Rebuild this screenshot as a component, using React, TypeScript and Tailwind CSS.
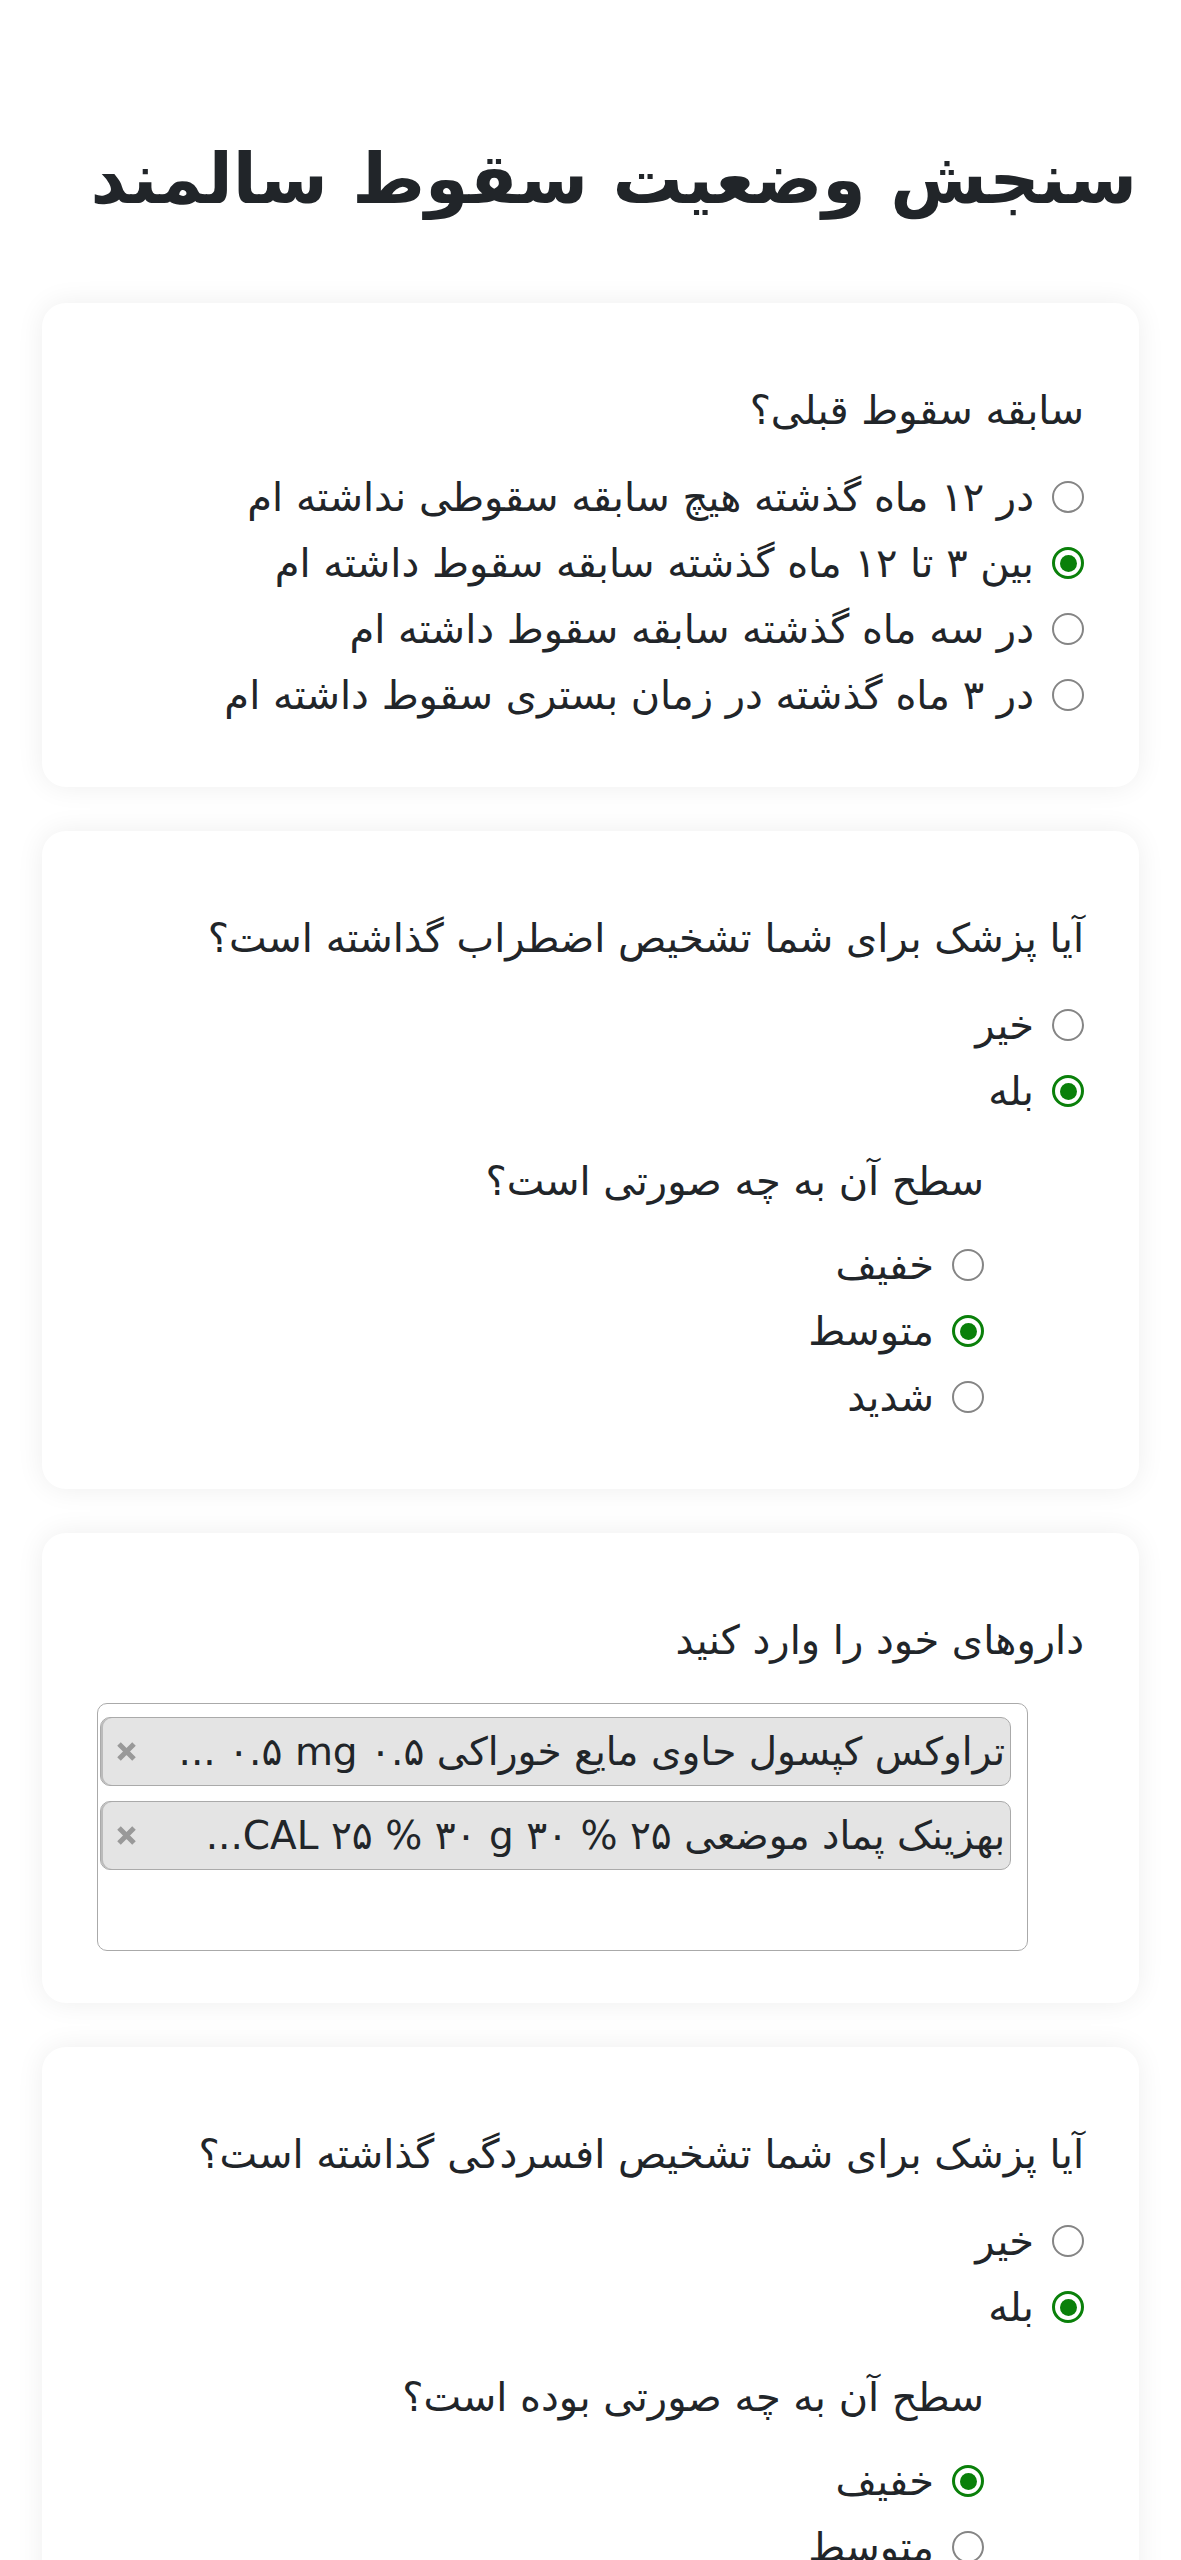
import React from "react";

type Opt = { label: string; checked?: boolean };

function Radio({ label, checked }: Opt) {
  return (
    <label className="flex h-[66px] items-center gap-[18px]">
      <span
        className={
          checked
            ? "flex h-[32px] w-[32px] shrink-0 items-center justify-center rounded-full border-[3px] border-[#0a800a] bg-white"
            : "flex h-[32px] w-[32px] shrink-0 items-center justify-center rounded-full border-[2.5px] border-[#858585] bg-white"
        }
      >
        {checked && <span className="h-[17px] w-[17px] rounded-full bg-[#0a800a]" />}
      </span>
      <span>{label}</span>
    </label>
  );
}

function Card({ children }: { children: React.ReactNode }) {
  return (
    <div className="rounded-[24px] bg-white pb-[59px] pl-[58px] pr-[55px] pt-[74px] shadow-[0_0_28px_rgba(0,0,0,0.07)]">
      {children}
    </div>
  );
}

function Question({ title, options, sub }: { title: string; options: Opt[]; sub?: { title: string; options: Opt[] } }) {
  return (
    <div>
      <p>{title}</p>
      <div className="mt-[21px]">
        {options.map((o) => (
          <Radio key={o.label} {...o} />
        ))}
      </div>
      {sub && (
        <div className="mr-[100px] mt-[24px]">
          <p>{sub.title}</p>
          <div className="mt-[18px]">
            {sub.options.map((o) => (
              <Radio key={o.label} {...o} />
            ))}
          </div>
        </div>
      )}
    </div>
  );
}

const TAGS = [
  "تراوکس کپسول حاوی مایع خوراکی ۰.۵ mg\u200F ۰.۵ ...",
  "بهزینک پماد موضعی ۲۵ % ۳۰ g\u200F ۳۰ % ۲۵ CAL\u200F...",
];

export default function App() {
  return (
    <div
      dir="rtl"
      className="min-h-screen bg-white px-[42px] pb-[60px] font-['DejaVu_Sans',sans-serif] text-[40px] leading-[66px] text-[#212529]"
    >
      <h1 className="mb-[76px] whitespace-nowrap pr-[2px] pt-[131px] text-[70px] font-bold leading-[96px]">
        سنجش وضعیت سقوط سالمند
      </h1>

      <div className="flex flex-col gap-[44px]">
        <Card>
          <Question
            title="سابقه سقوط قبلی؟"
            options={[
              { label: "در ۱۲ ماه گذشته هیچ سابقه سقوطی نداشته ام" },
              { label: "بین ۳ تا ۱۲ ماه گذشته سابقه سقوط داشته ام", checked: true },
              { label: "در سه ماه گذشته سابقه سقوط داشته ام" },
              { label: "در ۳ ماه گذشته در زمان بستری سقوط داشته ام" },
            ]}
          />
        </Card>

        <Card>
          <Question
            title="آیا پزشک برای شما تشخیص اضطراب گذاشته است؟"
            options={[{ label: "خیر" }, { label: "بله", checked: true }]}
            sub={{
              title: "سطح آن به چه صورتی است؟",
              options: [{ label: "خفیف" }, { label: "متوسط", checked: true }, { label: "شدید" }],
            }}
          />
        </Card>

        <div className="rounded-[24px] bg-white pb-[52px] pl-[58px] pr-[55px] pt-[74px] shadow-[0_0_28px_rgba(0,0,0,0.07)]">
          <p>داروهای خود را وارد کنید</p>
          <div className="ml-[-3px] mr-auto mt-[30px] w-[931px] rounded-[10px] border-[1.5px] border-[#aaa] pl-[2px] pr-[16px] pt-[13px]">
            <div className="flex flex-col gap-[15px]">
              {TAGS.map((t) => (
                <div
                  key={t}
                  className="flex h-[69px] items-center rounded-[10px] border-[1.5px] border-[#aaa] bg-[#e4e4e4] pl-[15px] pr-[5px] shadow-[inset_2px_0_0_#bbb]"
                >
                  <span className="min-w-0 flex-1 overflow-hidden whitespace-nowrap text-[39px]">{t}</span>
                  <svg width="21" height="21" viewBox="0 0 21 21" className="mr-[22px] shrink-0">
                    <path d="M3 3 L18 18 M18 3 L3 18" stroke="#999" strokeWidth="5" />
                  </svg>
                </div>
              ))}
            </div>
            <div className="h-[80px]" />
          </div>
        </div>

        <Card>
          <Question
            title="آیا پزشک برای شما تشخیص افسردگی گذاشته است؟"
            options={[{ label: "خیر" }, { label: "بله", checked: true }]}
            sub={{
              title: "سطح آن به چه صورتی بوده است؟",
              options: [{ label: "خفیف", checked: true }, { label: "متوسط" }, { label: "شدید" }],
            }}
          />
        </Card>
      </div>
    </div>
  );
}
